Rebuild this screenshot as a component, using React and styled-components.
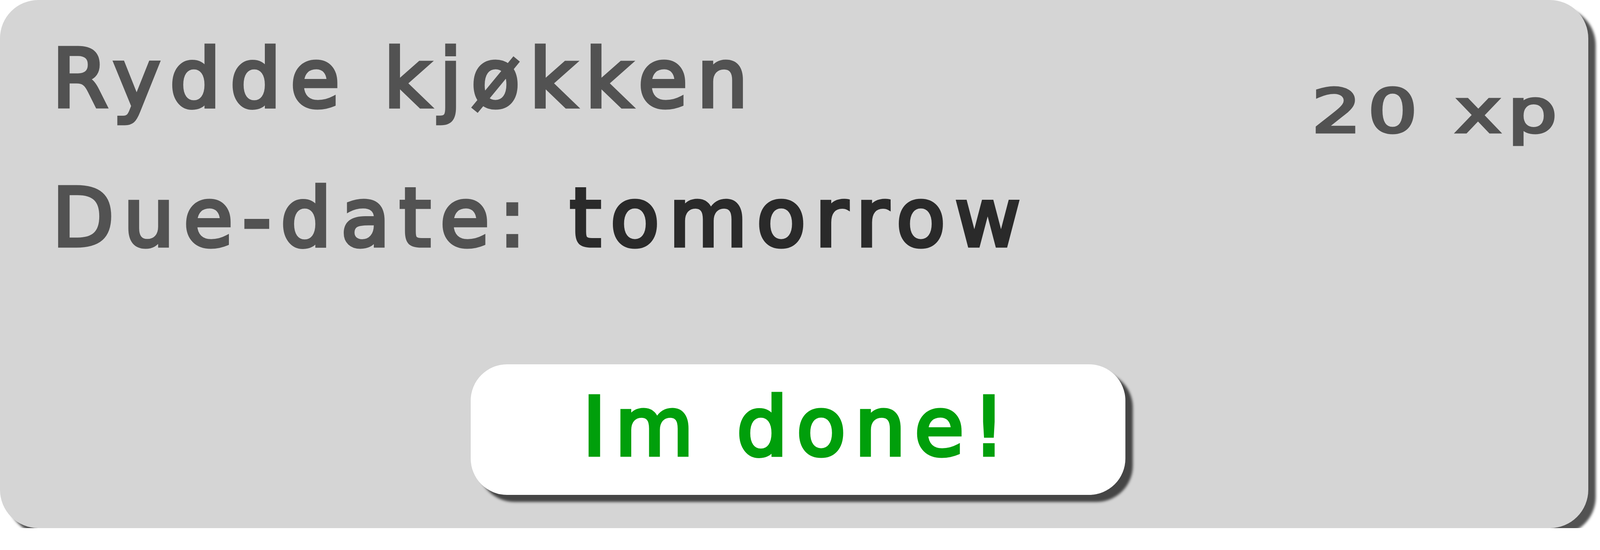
import styled, { createGlobalStyle } from 'styled-components';

const GlobalStyle = createGlobalStyle`
    body {
        margin: 0;
        background: #ffffff;
        font-family: "DejaVu Sans", "Liberation Sans", sans-serif;
    }
`;

const Card = styled.div`
    box-sizing: border-box;
    width: 4066px;
    height: 1351px;
    padding: 81px 63px 0 133px;
    background-color: #d5d5d5;
    border-radius: 98px;
    box-shadow: 19px 18px 6px #525252;
    display: flex;
    flex-direction: column;
`;

const Header = styled.div`
    display: flex;
    justify-content: space-between;
    align-items: flex-start;
`;

const Info = styled.div`
    display: flex;
    flex-direction: column;
    gap: 115px;
`;

const Line = styled.div`
    margin: 0;
    font-size: 207px;
    font-weight: 400;
    line-height: 241px;
    letter-spacing: 23px;
    color: #525252;
    -webkit-text-stroke: 9px #525252;
`;

const Xp = styled.span`
    margin-top: 115px;
    font-size: 153px;
    font-weight: 400;
    line-height: 179px;
    letter-spacing: 13px;
    color: #525252;
    -webkit-text-stroke: 7px #525252;
    transform: scaleX(1.3);
    transform-origin: right center;
`;

const When = styled.span`
    color: #2a2a2a;
    -webkit-text-stroke-color: #2a2a2a;
`;

const Actions = styled.div`
    display: flex;
    justify-content: center;
    margin-top: 254px;
    padding-right: 50px;
`;

const DoneButton = styled.button`
    width: 1676px;
    height: 334px;
    padding: 0 0 14px 0;
    border: none;
    border-radius: 93px;
    background-color: #ffffff;
    box-shadow: 19px 18px 6px #454545;
    font-family: inherit;
    font-size: 207px;
    font-weight: 400;
    line-height: 241px;
    letter-spacing: 22px;
    color: #009f0b;
    -webkit-text-stroke: 9px #009f0b;
    cursor: pointer;
`;

const TaskCard = ({ title, xp, due, onDone }) => {
    return (
        <Card>
            <Header>
                <Info>
                    <Line as="h1">{title}</Line>
                    <Line as="p">Due-date: <When>{due}</When></Line>
                </Info>
                <Xp>{xp} xp</Xp>
            </Header>
            <Actions>
                <DoneButton onClick={onDone}>Im done!</DoneButton>
            </Actions>
        </Card>
    );
};

const App = () => {
    return (
        <>
            <GlobalStyle />
            <TaskCard title="Rydde kjøkken" xp={20} due="tomorrow" onDone={() => {}} />
        </>
    );
};

export default App;
